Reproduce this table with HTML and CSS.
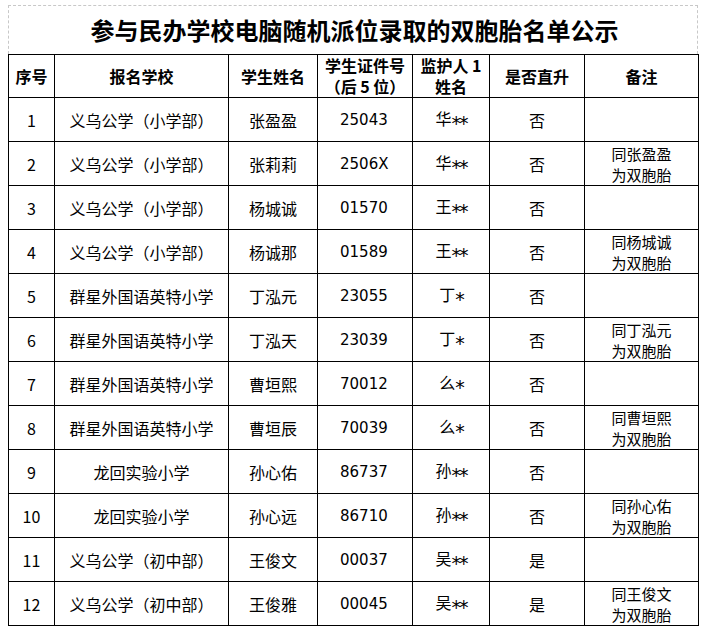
FILE: index.html
```html
<!DOCTYPE html>
<html lang="zh-CN">
<head>
<meta charset="utf-8">
<title>双胞胎名单公示</title>
<link rel="stylesheet" href="styles.css">
</head>
<body>
<div class="sheet">
  <div class="title-box">
    <h1 class="title">参与民办学校电脑随机派位录取的双胞胎名单公示</h1>
  </div>
  <table class="list">
    <colgroup>
      <col class="c1"><col class="c2"><col class="c3"><col class="c4"><col class="c5"><col class="c6"><col class="c7">
    </colgroup>
    <thead>
      <tr class="head">
        <th>序号</th>
        <th>报名学校</th>
        <th>学生姓名</th>
        <th class="two">学生证件号<br>（后 5 位）</th>
        <th class="two">监护人 1<br>姓名</th>
        <th>是否直升</th>
        <th>备注</th>
      </tr>
    </thead>
    <tbody>
      <tr><td>1</td><td>义乌公学（小学部）</td><td>张盈盈</td><td class="num">25043</td><td>华<span class="mask">**</span></td><td>否</td><td class="note"></td></tr>
      <tr><td>2</td><td>义乌公学（小学部）</td><td>张莉莉</td><td class="num">2506X</td><td>华<span class="mask">**</span></td><td>否</td><td class="note">同张盈盈<br>为双胞胎</td></tr>
      <tr><td>3</td><td>义乌公学（小学部）</td><td>杨城诚</td><td class="num">01570</td><td>王<span class="mask">**</span></td><td>否</td><td class="note"></td></tr>
      <tr><td>4</td><td>义乌公学（小学部）</td><td>杨诚那</td><td class="num">01589</td><td>王<span class="mask">**</span></td><td>否</td><td class="note">同杨城诚<br>为双胞胎</td></tr>
      <tr><td>5</td><td>群星外国语英特小学</td><td>丁泓元</td><td class="num">23055</td><td>丁<span class="mask">*</span></td><td>否</td><td class="note"></td></tr>
      <tr><td>6</td><td>群星外国语英特小学</td><td>丁泓天</td><td class="num">23039</td><td>丁<span class="mask">*</span></td><td>否</td><td class="note">同丁泓元<br>为双胞胎</td></tr>
      <tr><td>7</td><td>群星外国语英特小学</td><td>曹垣熙</td><td class="num">70012</td><td>么<span class="mask">*</span></td><td>否</td><td class="note"></td></tr>
      <tr><td>8</td><td>群星外国语英特小学</td><td>曹垣辰</td><td class="num">70039</td><td>么<span class="mask">*</span></td><td>否</td><td class="note">同曹垣熙<br>为双胞胎</td></tr>
      <tr><td>9</td><td>龙回实验小学</td><td>孙心佑</td><td class="num">86737</td><td>孙<span class="mask">**</span></td><td>否</td><td class="note"></td></tr>
      <tr><td>10</td><td>龙回实验小学</td><td>孙心远</td><td class="num">86710</td><td>孙<span class="mask">**</span></td><td>否</td><td class="note">同孙心佑<br>为双胞胎</td></tr>
      <tr><td>11</td><td>义乌公学（初中部）</td><td>王俊文</td><td class="num">00037</td><td>吴<span class="mask">**</span></td><td>是</td><td class="note"></td></tr>
      <tr><td>12</td><td>义乌公学（初中部）</td><td>王俊雅</td><td class="num">00045</td><td>吴<span class="mask">**</span></td><td>是</td><td class="note">同王俊文<br>为双胞胎</td></tr>
    </tbody>
  </table>
</div>
</body>
</html>
```

FILE: styles.css
```css
html, body {
  margin: 0;
  padding: 0;
  background: #ffffff;
}

body {
  font-family: "Noto Sans CJK SC", "DejaVu Sans", sans-serif;
  color: #000000;
}

.sheet {
  padding: 5px 0 0 8px;
  width: 690px;
}

.title-box {
  box-sizing: border-box;
  width: 690px;
  height: 49px;
  border-top: 1px dashed #c8c8c8;
  border-left: 1px dashed #c8c8c8;
  border-right: 1px dashed #c8c8c8;
  display: flex;
  align-items: center;
  justify-content: center;
}

.title {
  margin: 0;
  font-size: 24px;
  font-weight: bold;
  line-height: 30px;
  padding-left: 3px;
}

.list {
  border-collapse: collapse;
  table-layout: fixed;
  width: 690px;
}

.c1 { width: 46px; }
.c2 { width: 174px; }
.c3 { width: 89px; }
.c4 { width: 95px; }
.c5 { width: 77px; }
.c6 { width: 95px; }
.c7 { width: 114px; }

.list th,
.list td {
  border: 1px solid #000000;
  padding: 0;
  text-align: center;
  vertical-align: middle;
  overflow: hidden;
}

.list th {
  font-size: 16px;
  font-weight: bold;
  line-height: 21px;
}

.head {
  height: 42px;
}

.list tbody tr {
  height: 44px;
}

.list td {
  font-size: 16px;
  font-weight: normal;
  line-height: 20px;
}

.list td.num {
  font-family: "DejaVu Sans", "Noto Sans CJK SC", sans-serif;
  font-size: 15px;
  text-align: left;
  padding-left: 22px;
}

.list td.note {
  font-size: 15px;
  line-height: 21px;
}

.mask {
  font-family: "DejaVu Sans", sans-serif;
  font-size: 19px;
  line-height: 16px;
  vertical-align: -5px;
  letter-spacing: -2px;
}
```
